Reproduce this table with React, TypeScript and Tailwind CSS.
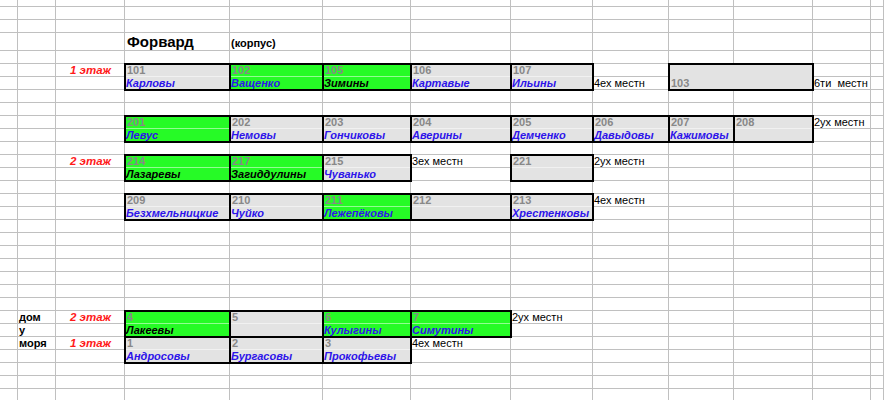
import React from 'react';

// column widths / row heights of the sheet (px)
const colWidths = [18, 38, 69, 105, 93, 88, 100, 82, 76, 65, 79, 58, 13];
const rowCount = 4 + 27;

type Room = {
  col: number;
  row: number;
  num: string;
  name?: string;
  green?: boolean;
  dark?: boolean;
  span?: number;
};

// row: sheet row index after the header (r0 = first 13px row)
const rooms: Room[] = [
  { col: 4, row: 1, num: '101', name: 'Карловы' },
  { col: 5, row: 1, num: '102', name: 'Ващенко', green: true },
  { col: 6, row: 1, num: '105', name: 'Зимины', green: true, dark: true },
  { col: 7, row: 1, num: '106', name: 'Картавые' },
  { col: 8, row: 1, num: '107', name: 'Ильины' },

  { col: 4, row: 5, num: '201', name: 'Левус', green: true },
  { col: 5, row: 5, num: '202', name: 'Немовы' },
  { col: 6, row: 5, num: '203', name: 'Гончиковы' },
  { col: 7, row: 5, num: '204', name: 'Аверины' },
  { col: 8, row: 5, num: '205', name: 'Демченко' },
  { col: 9, row: 5, num: '206', name: 'Давыдовы' },
  { col: 10, row: 5, num: '207', name: 'Кажимовы' },
  { col: 11, row: 5, num: '208' },

  { col: 4, row: 8, num: '214', name: 'Лазаревы', green: true, dark: true },
  { col: 5, row: 8, num: '217', name: 'Загиддулины', green: true, dark: true },
  { col: 6, row: 8, num: '215', name: 'Чуванько' },
  { col: 8, row: 8, num: '221' },

  { col: 4, row: 11, num: '209', name: 'Безхмельницкие' },
  { col: 5, row: 11, num: '210', name: 'Чуйко' },
  { col: 6, row: 11, num: '211', name: 'Лежепёковы', green: true },
  { col: 7, row: 11, num: '212' },
  { col: 8, row: 11, num: '213', name: 'Хрестенковы' },

  { col: 4, row: 20, num: '4', name: 'Лакеевы', green: true, dark: true },
  { col: 5, row: 20, num: '5' },
  { col: 6, row: 20, num: '6', name: 'Кулыгины', green: true },
  { col: 7, row: 20, num: '7', name: 'Симутины', green: true },

  { col: 4, row: 22, num: '1', name: 'Андросовы' },
  { col: 5, row: 22, num: '2', name: 'Бургасовы' },
  { col: 6, row: 22, num: '3', name: 'Прокофьевы' },
];

const notes = [
  { col: 9, row: 2, text: '4ех местн' },
  { col: 12, row: 2, text: '6ти  местн' },
  { col: 12, row: 5, text: '2ух местн' },
  { col: 7, row: 8, text: '3ех местн' },
  { col: 9, row: 8, text: '2ух местн' },
  { col: 9, row: 11, text: '4ех местн' },
  { col: 8, row: 20, text: '2ух местн' },
  { col: 7, row: 22, text: '4ех местн' },
];

const floors = [
  { row: 1, text: '1 этаж' },
  { row: 8, text: '2 этаж' },
  { row: 20, text: '2 этаж' },
  { row: 22, text: '1 этаж' },
];

const house = [
  { row: 20, text: 'дом' },
  { row: 21, text: 'у' },
  { row: 22, text: 'моря' },
];

const r = (n: number) => n + 5;

export default function App() {
  const cells = [];
  for (let y = 1; y <= rowCount; y++) {
    for (let x = 1; x <= colWidths.length; x++) {
      cells.push(
        <div
          key={`${x}-${y}`}
          className="border-r border-b border-[#c0c0c0]"
          style={{ gridColumn: x, gridRow: y }}
        />
      );
    }
  }

  return (
    <div className="w-[884px] h-[400px] overflow-hidden bg-white font-['Liberation_Sans',Arial,sans-serif] text-[11px]">
      <div className="grid grid-cols-[18px_38px_69px_105px_93px_88px_100px_82px_76px_65px_79px_58px_13px] grid-rows-[7px_13px_13px_18px_repeat(27,13px)]">
        {cells}

        {/* header */}
        <div className="col-start-4 row-start-4 flex items-end pl-[2px] pb-[1px] font-bold text-[15px] leading-[17px] text-black whitespace-nowrap">
          Форвард
        </div>
        <div className="col-start-5 row-start-4 flex items-end pl-[1px] pb-[1px] font-bold text-[11px] leading-[13px] text-black whitespace-nowrap">
          (корпус)
        </div>

        {/* rooms */}
        {rooms.map((room) => (
          <div
            key={room.num + room.row}
            className={`flex flex-col outline-2 outline-black -outline-offset-1 ${
              room.green ? 'bg-[#26fb26]' : 'bg-[#e3e3e3]'
            }`}
            style={{ gridColumn: `${room.col} / span ${room.span ?? 1}`, gridRow: `${r(room.row)} / span 2` }}
          >
            <div className="h-[13px] border-b border-white/50 pl-[2px] font-bold text-[#888888] leading-[13px] whitespace-nowrap">
              {room.num}
            </div>
            <div
              className={`h-[13px] pl-[1px] font-bold italic leading-[13px] whitespace-nowrap ${
                room.dark ? 'text-black' : 'text-[#2d13ea]'
              }`}
            >
              {room.name}
            </div>
          </div>
        ))}

        {/* merged 103 */}
        <div
          className="flex items-end outline-2 outline-black -outline-offset-1 bg-[#e3e3e3] pl-[2px] font-bold text-[#888888] leading-[13px]"
          style={{ gridColumn: '10 / span 2', gridRow: `${r(1)} / span 2` }}
        >
          103
        </div>

        {/* notes */}
        {notes.map((n) => (
          <div
            key={`${n.col}-${n.row}`}
            className="pl-[1px] leading-[13px] text-black whitespace-pre"
            style={{ gridColumn: n.col, gridRow: r(n.row) }}
          >
            {n.text}
          </div>
        ))}

        {floors.map((f) => (
          <div
            key={f.row}
            className="col-start-3 pr-[14px] text-right font-bold italic text-[11.5px] leading-[13px] text-[#ff1a1a] whitespace-nowrap"
            style={{ gridRow: r(f.row) }}
          >
            {f.text}
          </div>
        ))}

        {house.map((h) => (
          <div
            key={h.row}
            className="col-start-2 pl-[1px] font-bold leading-[13px] text-black whitespace-nowrap"
            style={{ gridRow: r(h.row) }}
          >
            {h.text}
          </div>
        ))}
      </div>
    </div>
  );
}
